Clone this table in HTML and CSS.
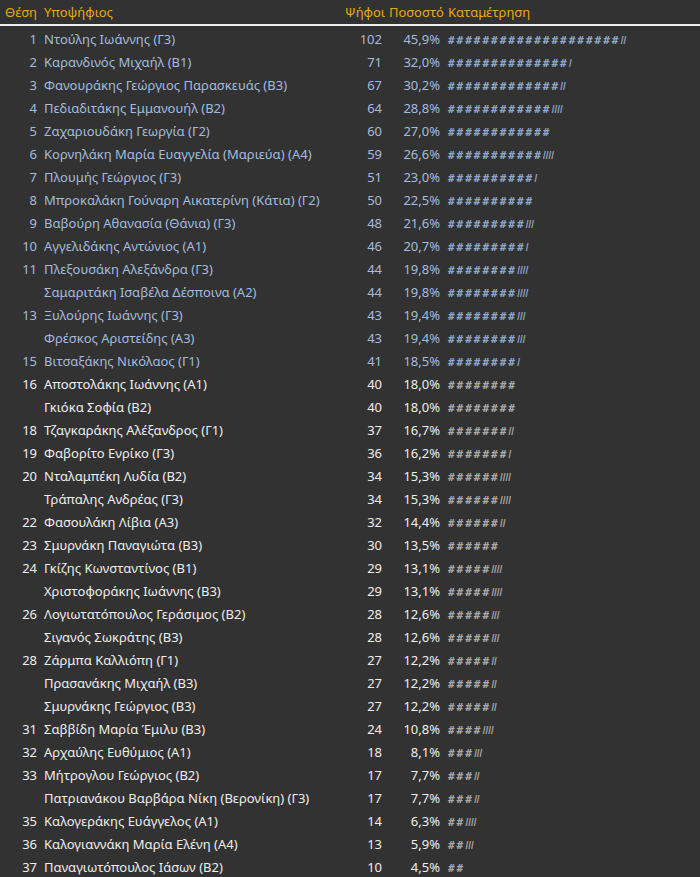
FILE: index.html
```html
<!DOCTYPE html>
<html lang="el">
<head>
<meta charset="utf-8">
<link rel="stylesheet" href="styles.css">
</head>
<body>
<div class="board">
  <div class="row head"><span class="rank">Θέση</span><span class="name">Υποψήφιος</span><span class="votes">Ψήφοι</span><span class="pct">Ποσοστό</span><span class="bar">Καταμέτρηση</span></div>
  <div class="row el"><span class="rank">1</span><span class="name">Ντούλης Ιωάννης (Γ3)</span><span class="votes">102</span><span class="pct">45,9%</span><span class="bar"><b>####################</b><i>II</i></span></div>
  <div class="row el"><span class="rank">2</span><span class="name">Καρανδινός Μιχαήλ (Β1)</span><span class="votes">71</span><span class="pct">32,0%</span><span class="bar"><b>##############</b><i>I</i></span></div>
  <div class="row el"><span class="rank">3</span><span class="name">Φανουράκης Γεώργιος Παρασκευάς (Β3)</span><span class="votes">67</span><span class="pct">30,2%</span><span class="bar"><b>#############</b><i>II</i></span></div>
  <div class="row el"><span class="rank">4</span><span class="name">Πεδιαδιτάκης Εμμανουήλ (Β2)</span><span class="votes">64</span><span class="pct">28,8%</span><span class="bar"><b>############</b><i>IIII</i></span></div>
  <div class="row el"><span class="rank">5</span><span class="name">Ζαχαριουδάκη Γεωργία (Γ2)</span><span class="votes">60</span><span class="pct">27,0%</span><span class="bar"><b>############</b></span></div>
  <div class="row el"><span class="rank">6</span><span class="name">Κορνηλάκη Μαρία Ευαγγελία (Μαριεύα) (Α4)</span><span class="votes">59</span><span class="pct">26,6%</span><span class="bar"><b>###########</b><i>IIII</i></span></div>
  <div class="row el"><span class="rank">7</span><span class="name">Πλουμής Γεώργιος (Γ3)</span><span class="votes">51</span><span class="pct">23,0%</span><span class="bar"><b>##########</b><i>I</i></span></div>
  <div class="row el"><span class="rank">8</span><span class="name">Μπροκαλάκη Γούναρη Αικατερίνη (Κάτια) (Γ2)</span><span class="votes">50</span><span class="pct">22,5%</span><span class="bar"><b>##########</b></span></div>
  <div class="row el"><span class="rank">9</span><span class="name">Βαβούρη Αθανασία (Θάνια) (Γ3)</span><span class="votes">48</span><span class="pct">21,6%</span><span class="bar"><b>#########</b><i>III</i></span></div>
  <div class="row el"><span class="rank">10</span><span class="name">Αγγελιδάκης Αντώνιος (Α1)</span><span class="votes">46</span><span class="pct">20,7%</span><span class="bar"><b>#########</b><i>I</i></span></div>
  <div class="row el"><span class="rank">11</span><span class="name">Πλεξουσάκη Αλεξάνδρα (Γ3)</span><span class="votes">44</span><span class="pct">19,8%</span><span class="bar"><b>########</b><i>IIII</i></span></div>
  <div class="row el"><span class="rank"></span><span class="name">Σαμαριτάκη Ισαβέλα Δέσποινα (Α2)</span><span class="votes">44</span><span class="pct">19,8%</span><span class="bar"><b>########</b><i>IIII</i></span></div>
  <div class="row el"><span class="rank">13</span><span class="name">Ξυλούρης Ιωάννης (Γ3)</span><span class="votes">43</span><span class="pct">19,4%</span><span class="bar"><b>########</b><i>III</i></span></div>
  <div class="row el"><span class="rank"></span><span class="name">Φρέσκος Αριστείδης (Α3)</span><span class="votes">43</span><span class="pct">19,4%</span><span class="bar"><b>########</b><i>III</i></span></div>
  <div class="row el"><span class="rank">15</span><span class="name">Βιτσαξάκης Νικόλαος (Γ1)</span><span class="votes">41</span><span class="pct">18,5%</span><span class="bar"><b>########</b><i>I</i></span></div>
  <div class="row"><span class="rank">16</span><span class="name">Αποστολάκης Ιωάννης (Α1)</span><span class="votes">40</span><span class="pct">18,0%</span><span class="bar"><b>########</b></span></div>
  <div class="row"><span class="rank"></span><span class="name">Γκιόκα Σοφία (Β2)</span><span class="votes">40</span><span class="pct">18,0%</span><span class="bar"><b>########</b></span></div>
  <div class="row"><span class="rank">18</span><span class="name">Τζαγκαράκης Αλέξανδρος (Γ1)</span><span class="votes">37</span><span class="pct">16,7%</span><span class="bar"><b>#######</b><i>II</i></span></div>
  <div class="row"><span class="rank">19</span><span class="name">Φαβορίτο Ενρίκο (Γ3)</span><span class="votes">36</span><span class="pct">16,2%</span><span class="bar"><b>#######</b><i>I</i></span></div>
  <div class="row"><span class="rank">20</span><span class="name">Νταλαμπέκη Λυδία (Β2)</span><span class="votes">34</span><span class="pct">15,3%</span><span class="bar"><b>######</b><i>IIII</i></span></div>
  <div class="row"><span class="rank"></span><span class="name">Τράπαλης Ανδρέας (Γ3)</span><span class="votes">34</span><span class="pct">15,3%</span><span class="bar"><b>######</b><i>IIII</i></span></div>
  <div class="row"><span class="rank">22</span><span class="name">Φασουλάκη Λίβια (Α3)</span><span class="votes">32</span><span class="pct">14,4%</span><span class="bar"><b>######</b><i>II</i></span></div>
  <div class="row"><span class="rank">23</span><span class="name">Σμυρνάκη Παναγιώτα (Β3)</span><span class="votes">30</span><span class="pct">13,5%</span><span class="bar"><b>######</b></span></div>
  <div class="row"><span class="rank">24</span><span class="name">Γκίζης Κωνσταντίνος (Β1)</span><span class="votes">29</span><span class="pct">13,1%</span><span class="bar"><b>#####</b><i>IIII</i></span></div>
  <div class="row"><span class="rank"></span><span class="name">Χριστοφοράκης Ιωάννης (Β3)</span><span class="votes">29</span><span class="pct">13,1%</span><span class="bar"><b>#####</b><i>IIII</i></span></div>
  <div class="row"><span class="rank">26</span><span class="name">Λογιωτατόπουλος Γεράσιμος (Β2)</span><span class="votes">28</span><span class="pct">12,6%</span><span class="bar"><b>#####</b><i>III</i></span></div>
  <div class="row"><span class="rank"></span><span class="name">Σιγανός Σωκράτης (Β3)</span><span class="votes">28</span><span class="pct">12,6%</span><span class="bar"><b>#####</b><i>III</i></span></div>
  <div class="row"><span class="rank">28</span><span class="name">Ζάρμπα Καλλιόπη (Γ1)</span><span class="votes">27</span><span class="pct">12,2%</span><span class="bar"><b>#####</b><i>II</i></span></div>
  <div class="row"><span class="rank"></span><span class="name">Πρασανάκης Μιχαήλ (Β3)</span><span class="votes">27</span><span class="pct">12,2%</span><span class="bar"><b>#####</b><i>II</i></span></div>
  <div class="row"><span class="rank"></span><span class="name">Σμυρνάκης Γεώργιος (Β3)</span><span class="votes">27</span><span class="pct">12,2%</span><span class="bar"><b>#####</b><i>II</i></span></div>
  <div class="row"><span class="rank">31</span><span class="name">Σαββίδη Μαρία Έμιλυ (Β3)</span><span class="votes">24</span><span class="pct">10,8%</span><span class="bar"><b>####</b><i>IIII</i></span></div>
  <div class="row"><span class="rank">32</span><span class="name">Αρχαύλης Ευθύμιος (Α1)</span><span class="votes">18</span><span class="pct">8,1%</span><span class="bar"><b>###</b><i>III</i></span></div>
  <div class="row"><span class="rank">33</span><span class="name">Μήτρογλου Γεώργιος (Β2)</span><span class="votes">17</span><span class="pct">7,7%</span><span class="bar"><b>###</b><i>II</i></span></div>
  <div class="row"><span class="rank"></span><span class="name">Πατριανάκου Βαρβάρα Νίκη (Βερονίκη) (Γ3)</span><span class="votes">17</span><span class="pct">7,7%</span><span class="bar"><b>###</b><i>II</i></span></div>
  <div class="row"><span class="rank">35</span><span class="name">Καλογεράκης Ευάγγελος (Α1)</span><span class="votes">14</span><span class="pct">6,3%</span><span class="bar"><b>##</b><i>IIII</i></span></div>
  <div class="row"><span class="rank">36</span><span class="name">Καλογιαννάκη Μαρία Ελένη (Α4)</span><span class="votes">13</span><span class="pct">5,9%</span><span class="bar"><b>##</b><i>III</i></span></div>
  <div class="row"><span class="rank">37</span><span class="name">Παναγιωτόπουλος Ιάσων (Β2)</span><span class="votes">10</span><span class="pct">4,5%</span><span class="bar"><b>##</b></span></div>
</div>
</body>
</html>
```

FILE: styles.css
```css
html, body {
  margin: 0;
  padding: 0;
  background: #323232;
}
body {
  font-family: "Noto Sans", "DejaVu Sans", sans-serif;
  font-size: 13px;
  color: #eeeeee;
}
.board {
  width: 700px;
}
.row {
  display: grid;
  grid-template-columns: 40px 302px 44px 58px 1fr;
  height: 23px;
  align-items: center;
  white-space: nowrap;
}
.row.el {
  color: #a3bcdf;
}
.rank {
  text-align: right;
  padding-right: 3px;
}
.name {
  padding-left: 4px;
}
.votes {
  text-align: right;
  padding-right: 4px;
}
.pct {
  text-align: right;
  padding-right: 4px;
}
.bar {
  padding-left: 4px;
  color: #a9a9a9;
}
.row.el .bar {
  color: #8ea7c8;
}
.bar b {
  font-family: "DejaVu Sans Mono", monospace;
  font-weight: bold;
  font-size: 11px;
  letter-spacing: 2px;
}
.bar i {
  font-family: "DejaVu Sans", sans-serif;
  font-size: 11px;
  letter-spacing: -0.5px;
}
.row.head {
  height: 24px;
  color: #eaa90c;
  border-bottom: 2px solid #f0f0f0;
  margin-bottom: 1px;
}
.head .rank {
  text-align: left;
  padding-left: 5px;
  padding-right: 0;
}
.head .votes,
.head .pct {
  text-align: left;
  padding-right: 0;
  padding-left: 3px;
}
.head .bar {
  color: #eaa90c;
}
```
